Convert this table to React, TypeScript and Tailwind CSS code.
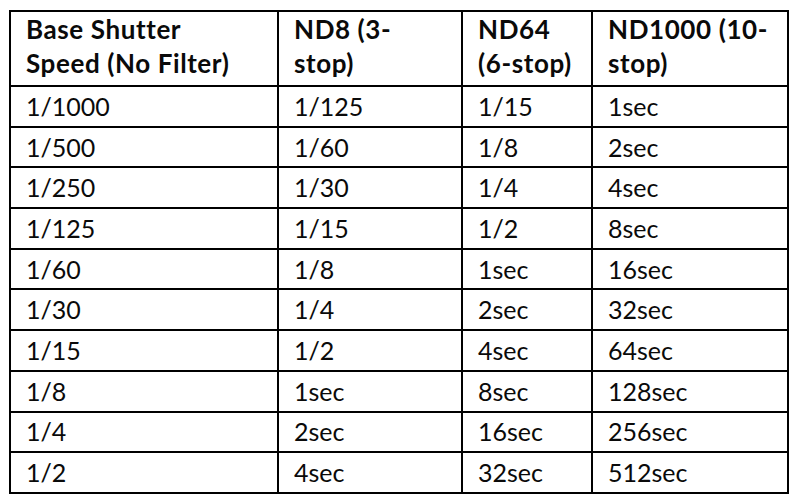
import React from 'react'

const rows = [
  ['1/1000', '1/125', '1/15', '1sec'],
  ['1/500', '1/60', '1/8', '2sec'],
  ['1/250', '1/30', '1/4', '4sec'],
  ['1/125', '1/15', '1/2', '8sec'],
  ['1/60', '1/8', '1sec', '16sec'],
  ['1/30', '1/4', '2sec', '32sec'],
  ['1/15', '1/2', '4sec', '64sec'],
  ['1/8', '1sec', '8sec', '128sec'],
  ['1/4', '2sec', '16sec', '256sec'],
  ['1/2', '4sec', '32sec', '512sec'],
]

const headers = [
  ['Base Shutter', 'Speed (No Filter)'],
  ['ND8 (3-', 'stop)'],
  ['ND64', '(6-stop)'],
  ['ND1000 (10-', 'stop)'],
]

export default function App() {
  return (
    <div className="w-[796px] h-[504px] bg-white pt-[10px] pl-[9px] font-['Lato','Liberation_Sans',sans-serif] text-[#0a0a0a]">
      <table className="table-fixed w-[778px] border-collapse border-2 border-black">
        <colgroup>
          <col className="w-[268px]" />
          <col className="w-[184px]" />
          <col className="w-[130px]" />
          <col className="w-[196px]" />
        </colgroup>
        <thead>
          <tr className="h-[75px]">
            {headers.map((h, i) => (
              <th
                key={i}
                className="border-2 border-black text-left align-top font-bold text-[26px] tracking-[0.6px] leading-[34px] pl-[15px] pt-0 whitespace-nowrap"
              >
                {h[0]}
                <br />
                {h[1]}
              </th>
            ))}
          </tr>
        </thead>
        <tbody>
          {rows.map((r, i) => (
            <tr key={i} className="h-[40.7px]">
              {r.map((c, j) => (
                <td key={j} className="border-2 border-black align-middle text-[25px] leading-none pl-[15px]">
                  {c}
                </td>
              ))}
            </tr>
          ))}
        </tbody>
      </table>
    </div>
  )
}
